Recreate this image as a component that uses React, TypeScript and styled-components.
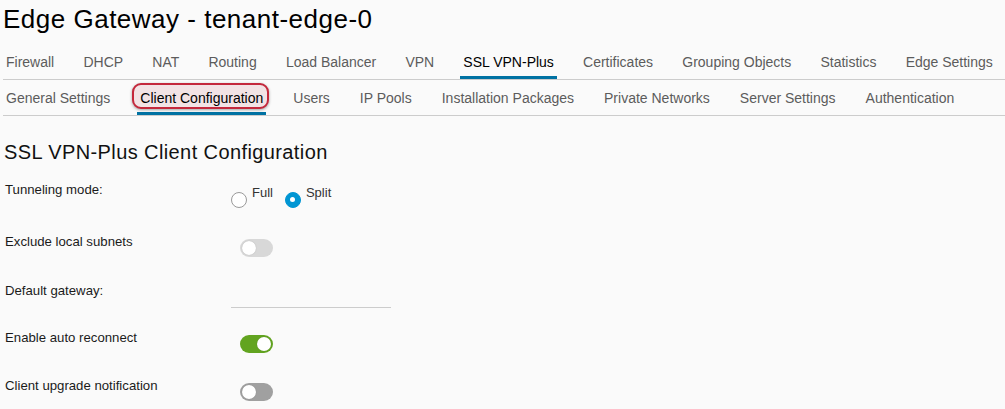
import React from 'react'
import styled, {createGlobalStyle} from 'styled-components'

const GlobalStyle = createGlobalStyle`
  html, body {
    margin: 0;
    background: #fafafa;
  }
  body {
    font-family: "Liberation Sans", Arial, sans-serif;
    color: #000;
  }
`

const Page = styled.div`
  width: 1005px;
  height: 409px;
  overflow: hidden;
  box-sizing: border-box;
  padding-left: 3px;
  background: #fafafa;
`

const Title = styled.h1`
  margin: 3px 0 9px;
  font-size: 26px;
  line-height: 32px;
  font-weight: 400;
  letter-spacing: 0.5px;
  color: #000;
`

type TabRowType = {
  $gap: number
  $size: number
}
const TabRow = styled.nav<TabRowType>`
  display: flex;
  gap: ${(p) => p.$gap}px;
  height: 35px;
  border-bottom: 1px solid #cccccc;
  font-size: ${(p) => p.$size}px;
`

type TabType = {
  $active?: boolean
  $marked?: boolean
}
const Tab = styled.a<TabType>`
  position: relative;
  z-index: 0;
  display: flex;
  align-items: center;
  padding: 0 3px;
  white-space: nowrap;
  color: ${(p) => (p.$active ? '#000' : '#5c5c5c')};
  box-shadow: ${(p) => (p.$active ? 'inset 0 -3px 0 #0072a3' : 'none')};
  cursor: pointer;

  &::before {
    content: '';
    display: ${(p) => (p.$marked ? 'block' : 'none')};
    position: absolute;
    z-index: -1;
    top: 3px;
    left: -5px;
    right: -3px;
    bottom: 6px;
    border: 2px solid #c4283c;
    border-radius: 9px;
    background: #f2e3e5;
    box-shadow: 0 1px 3px rgba(0, 0, 0, 0.35);
  }
`

const Heading = styled.h2`
  margin: 24px 0 17px;
  padding-left: 1px;
  font-size: 20px;
  line-height: 24px;
  font-weight: 400;
  letter-spacing: 0.4px;
  color: #111;
`

const Form = styled.div`
  display: flex;
  flex-direction: column;
  padding-top: 1px;
`

const Row = styled.div<{$h?: number}>`
  display: grid;
  grid-template-columns: 226px auto;
  align-items: start;
  height: ${(p) => (p.$h ? `${p.$h}px` : 'auto')};
  padding-left: 2px;
`

const Label = styled.span`
  font-size: 13.2px;
  line-height: 16px;
  color: #1a1a1a;
`

const RadioGroup = styled.div`
  display: flex;
  gap: 12px;
  padding-top: 3px;
`

const RadioItem = styled.label`
  display: flex;
  gap: 5px;
  font-size: 13px;
  line-height: 16px;
  color: #333;
`

const RadioDot = styled.span<{$checked?: boolean}>`
  display: flex;
  align-items: center;
  justify-content: center;
  box-sizing: border-box;
  width: 16px;
  height: 16px;
  margin-top: 6.5px;
  border-radius: 50%;
  border: 1px solid ${(p) => (p.$checked ? '#0095d3' : '#9a9a9a')};
  background: ${(p) => (p.$checked ? '#0095d3' : '#fff')};

  &::after {
    content: '';
    display: ${(p) => (p.$checked ? 'block' : 'none')};
    width: 5px;
    height: 5px;
    border-radius: 50%;
    background: #fff;
  }
`

type ToggleType = {
  $on?: boolean
  $track: string
}
const Toggle = styled.span<ToggleType>`
  display: flex;
  justify-content: ${(p) => (p.$on ? 'flex-end' : 'flex-start')};
  align-items: center;
  box-sizing: border-box;
  width: 33px;
  height: 18px;
  margin: 4.5px 0 0 9px;
  padding: 0 2px;
  border-radius: 9px;
  background: ${(p) => p.$track};
`

const Knob = styled.span`
  width: 14px;
  height: 14px;
  border-radius: 50%;
  background: #fff;
  box-shadow: 0 0 1px rgba(0, 0, 0, 0.25);
`

const TextInput = styled.input`
  box-sizing: border-box;
  width: 160px;
  height: 24px;
  margin-top: 0.5px;
  padding: 0;
  border: none;
  border-bottom: 1px solid #cccccc;
  background: transparent;
  outline: none;
`

const mainTabs = [
  'Firewall',
  'DHCP',
  'NAT',
  'Routing',
  'Load Balancer',
  'VPN',
  'SSL VPN-Plus',
  'Certificates',
  'Grouping Objects',
  'Statistics',
  'Edge Settings',
]

const subTabs = [
  'General Settings',
  'Client Configuration',
  'Users',
  'IP Pools',
  'Installation Packages',
  'Private Networks',
  'Server Settings',
  'Authentication',
]

const App = () => {
  return (
    <Page>
      <GlobalStyle />
      <Title>Edge Gateway - tenant-edge-0</Title>
      <TabRow $gap={23.2} $size={14}>
        {mainTabs.map((name) => (
          <Tab key={name} $active={name === 'SSL VPN-Plus'}>
            {name}
          </Tab>
        ))}
      </TabRow>
      <TabRow $gap={24} $size={14}>
        {subTabs.map((name) => (
          <Tab key={name} $active={name === 'Client Configuration'} $marked={name === 'Client Configuration'}>
            {name}
          </Tab>
        ))}
      </TabRow>

      <Heading>SSL VPN-Plus Client Configuration</Heading>

      <Form>
        <Row $h={52}>
          <Label>Tunneling mode:</Label>
          <RadioGroup>
            <RadioItem>
              <RadioDot />
              Full
            </RadioItem>
            <RadioItem>
              <RadioDot $checked />
              Split
            </RadioItem>
          </RadioGroup>
        </Row>
        <Row $h={49}>
          <Label>Exclude local subnets</Label>
          <Toggle $track="#d8d8d8">
            <Knob />
          </Toggle>
        </Row>
        <Row $h={47}>
          <Label>Default gateway:</Label>
          <TextInput />
        </Row>
        <Row $h={48}>
          <Label>Enable auto reconnect</Label>
          <Toggle $on $track="#62a420">
            <Knob />
          </Toggle>
        </Row>
        <Row>
          <Label>Client upgrade notification</Label>
          <Toggle $track="#a0a0a0">
            <Knob />
          </Toggle>
        </Row>
      </Form>
    </Page>
  )
}

export default App
